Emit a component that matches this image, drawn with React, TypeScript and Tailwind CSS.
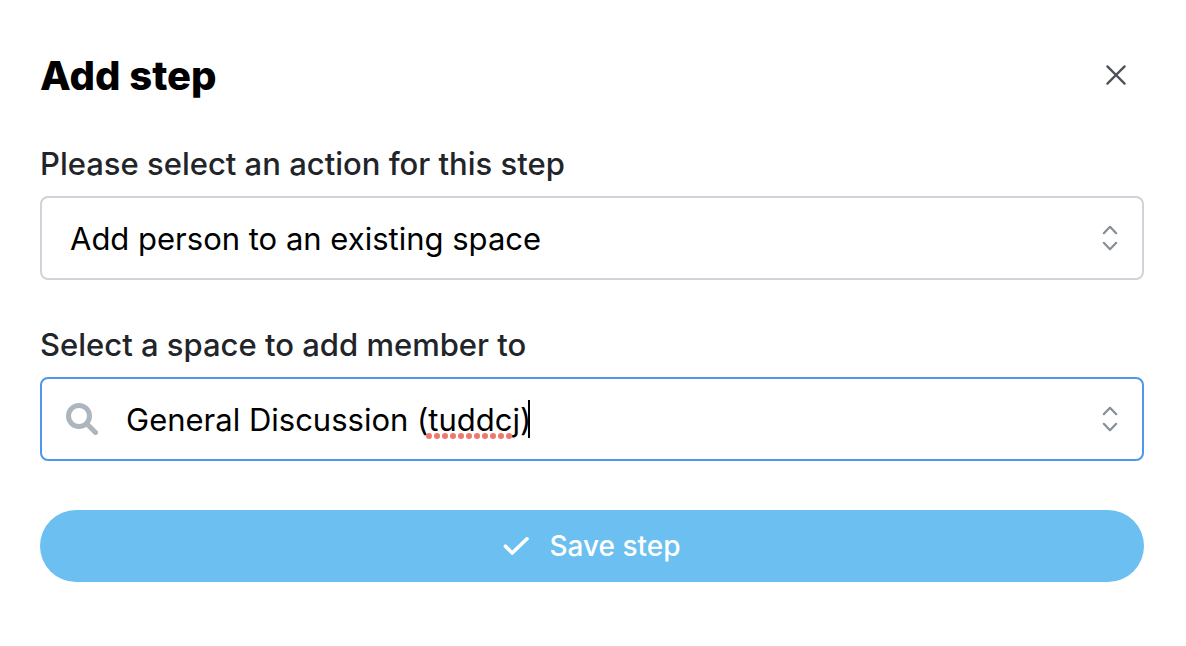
import React, { useState } from 'react';

const ACTIONS = ['Add person to an existing space', 'Remove person from a space', 'Send an email'];

const Chevrons: React.FC = () => (
  <svg
    className="pointer-events-none h-8 w-4 shrink-0"
    viewBox="0 0 16 32"
    fill="none"
    stroke="#868e96"
    strokeWidth="2.2"
    strokeLinecap="round"
    strokeLinejoin="round"
    aria-hidden="true"
  >
    <path d="m1.8 11.2 6.2-6.4 6.2 6.4M1.8 20.8l6.2 6.4 6.2-6.4" />
  </svg>
);

const SpellingMark: React.FC = () => (
  <svg className="absolute bottom-5 left-[300px] h-1.5 w-[87px]" viewBox="0 0 87 6" fill="#f1776b" aria-hidden="true">
    {Array.from({ length: 11 }, (_, i) => (
      <circle key={i} cx={3 + i * 8} cy={3} r={3} />
    ))}
  </svg>
);

export default function App() {
  const [action, setAction] = useState(ACTIONS[0]);
  const [space, setSpace] = useState('General Discussion (tuddcj)');

  return (
    <main className="flex min-h-screen flex-col gap-10 bg-white px-10 py-[52px] font-['Inter',sans-serif] text-black">
      <header className="flex items-start justify-between">
        <h1 className="text-[40px] leading-[48px] font-extrabold">Add step</h1>
        <button type="button" aria-label="Close" className="flex h-[46px] w-[60px] items-center justify-center">
          <svg className="h-5 w-5" viewBox="0 0 20 20" fill="none" stroke="#495057" strokeWidth="2.2" strokeLinecap="round" aria-hidden="true">
            <path d="m1.4 1.4 17.2 17.2M18.6 1.4 1.4 18.6" />
          </svg>
        </button>
      </header>

      <form className="flex flex-col gap-[41px] pr-0.5" onSubmit={(e) => e.preventDefault()}>
        {/* Action */}
        <div className="flex flex-col gap-2">
          <label htmlFor="action" className="text-[31px] leading-[48px] font-medium text-[#212529]">
            Please select an action for this step
          </label>
          <div className="flex h-[84px] items-center rounded-lg border-2 border-[#ced4da] bg-white pr-6">
            <select
              id="action"
              value={action}
              onChange={(e) => setAction(e.target.value)}
              className="h-full min-w-0 flex-1 appearance-none bg-transparent pt-0.5 pl-7 text-[31px] outline-none"
            >
              {ACTIONS.map((a) => (
                <option key={a}>{a}</option>
              ))}
            </select>
            <Chevrons />
          </div>
        </div>

        {/* Space */}
        <div className="flex flex-col gap-2">
          <label htmlFor="space" className="text-[31px] leading-[48px] font-medium text-[#212529]">
            Select a space to add member to
          </label>
          <div className="flex h-[84px] items-center gap-7 rounded-lg border-2 border-[#4f97e8] bg-white px-6">
            <svg
              className="h-8 w-8 shrink-0"
              viewBox="0 0 32 32"
              fill="none"
              stroke="#adb5bd"
              strokeWidth="5"
              strokeLinecap="round"
              aria-hidden="true"
            >
              <circle cx="13" cy="13" r="10.5" />
              <path d="m21 21 8.5 8.5" />
            </svg>
            <div className="relative flex h-full min-w-0 flex-1 items-center">
              <input
                id="space"
                type="text"
                value={space}
                spellCheck={false}
                onChange={(e) => setSpace(e.target.value)}
                className="h-full w-full bg-transparent text-[31px] outline-none"
              />
              <SpellingMark />
              {/* caret */}
              <span className="absolute left-[402px] h-[38px] w-0.5 bg-black" />
            </div>
            <Chevrons />
          </div>
        </div>

        <button
          type="submit"
          className="mt-2 flex h-[72px] items-center justify-center gap-5 rounded-full bg-[#6bbff1] text-[28px] font-medium text-white"
        >
          <svg className="h-5 w-[26px]" viewBox="0 0 26 20" fill="none" stroke="currentColor" strokeWidth="3.6" strokeLinecap="round" strokeLinejoin="round" aria-hidden="true">
            <path d="m2.4 10.2 6.8 6.8L24 2.8" />
          </svg>
          Save step
        </button>
      </form>
    </main>
  );
}
